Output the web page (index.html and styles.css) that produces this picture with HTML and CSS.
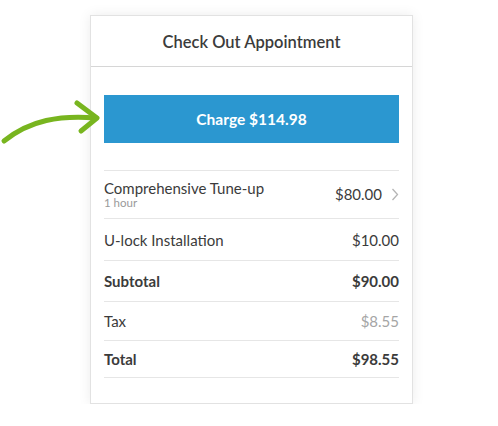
FILE: index.html
```html
<!DOCTYPE html>
<html lang="en">
<head>
<meta charset="UTF-8">
<title>Check Out Appointment</title>
<link rel="stylesheet" href="styles.css">
</head>
<body>
<div class="stage">
    <svg class="arrow" width="104" height="60" viewBox="0 0 104 60">
        <path d="M4 56 C30 35 60 30 96 33" fill="none" stroke="#78b51f" stroke-width="5" stroke-linecap="round"/>
        <path d="M77 18 L97 33 L81 46" fill="none" stroke="#78b51f" stroke-width="5" stroke-linecap="round" stroke-linejoin="round"/>
    </svg>
    <div class="card">
        <div class="card-header">Check Out Appointment</div>
        <div class="card-body">
            <button class="charge">Charge $114.98</button>
            <div class="lines">
                <div class="line item">
                    <div class="name">Comprehensive Tune-up<span class="sub">1 hour</span></div>
                    <div class="amount">$80.00 <span class="chev">
                        <svg width="8" height="13" viewBox="0 0 8 13"><path d="M1.5 1 L6.5 6.5 L1.5 12" fill="none" stroke="#b5b5b5" stroke-width="1.3"/></svg>
                    </span></div>
                </div>
                <div class="line h42">
                    <div class="name">U-lock Installation</div>
                    <div class="amount">$10.00</div>
                </div>
                <div class="line bold h41">
                    <div class="name">Subtotal</div>
                    <div class="amount">$90.00</div>
                </div>
                <div class="line h39">
                    <div class="name">Tax</div>
                    <div class="amount muted">$8.55</div>
                </div>
                <div class="line bold h37">
                    <div class="name">Total</div>
                    <div class="amount">$98.55</div>
                </div>
            </div>
        </div>
    </div>
</div>
</body>
</html>
```

FILE: styles.css
```css
body {
    margin: 0;
    padding: 0;
    background-color: #fff;
    font-family: Lato, "Open Sans", Arial, sans-serif;
    color: #3b3b3b;
}
.stage {
    position: relative;
    padding: 15px 0 0 90px;
}
.arrow {
    position: absolute;
    left: 0;
    top: 85px;
}
.card {
    width: 321px;
    height: 387px;
    border: 1px solid #e2e2e2;
    box-shadow: 0 0 12px rgba(0, 0, 0, 0.08);
    background-color: #fff;
}
.card-header {
    height: 51px;
    border-bottom: 1px solid #d6d6d6;
    display: flex;
    align-items: center;
    justify-content: center;
    font-size: 16.5px;
    font-weight: 600;
    padding-top: 1px;
    box-sizing: border-box;
}
.card-body {
    padding: 28px 13px 0 13px;
}
.charge {
    display: block;
    width: 100%;
    height: 48px;
    border: none;
    background-color: #2b97d0;
    color: #fff;
    font-family: inherit;
    font-size: 15.5px;
    font-weight: 700;
    cursor: pointer;
}
.lines {
    margin-top: 27px;
    border-bottom: 1px solid #e6e6e6;
}
.line {
    display: flex;
    justify-content: space-between;
    align-items: center;
    border-top: 1px solid #e6e6e6;
    font-size: 15px;
    box-sizing: border-box;
}
.h42 { height: 42px; }
.h41 { height: 41px; }
.h39 { height: 39px; }
.h37 { height: 37px; }
.line.item {
    height: 48px;
    align-items: flex-start;
    padding-top: 8px;
}
.line.bold {
    font-weight: 700;
}
.name .sub {
    display: block;
    font-size: 11.5px;
    color: #9a9a9a;
    margin-top: -1px;
}
.item .amount {
    display: flex;
    align-items: center;
    gap: 9px;
    margin-top: 6px;
}
.chev {
    display: flex;
}
.muted {
    color: #a5a5a5;
}
```
